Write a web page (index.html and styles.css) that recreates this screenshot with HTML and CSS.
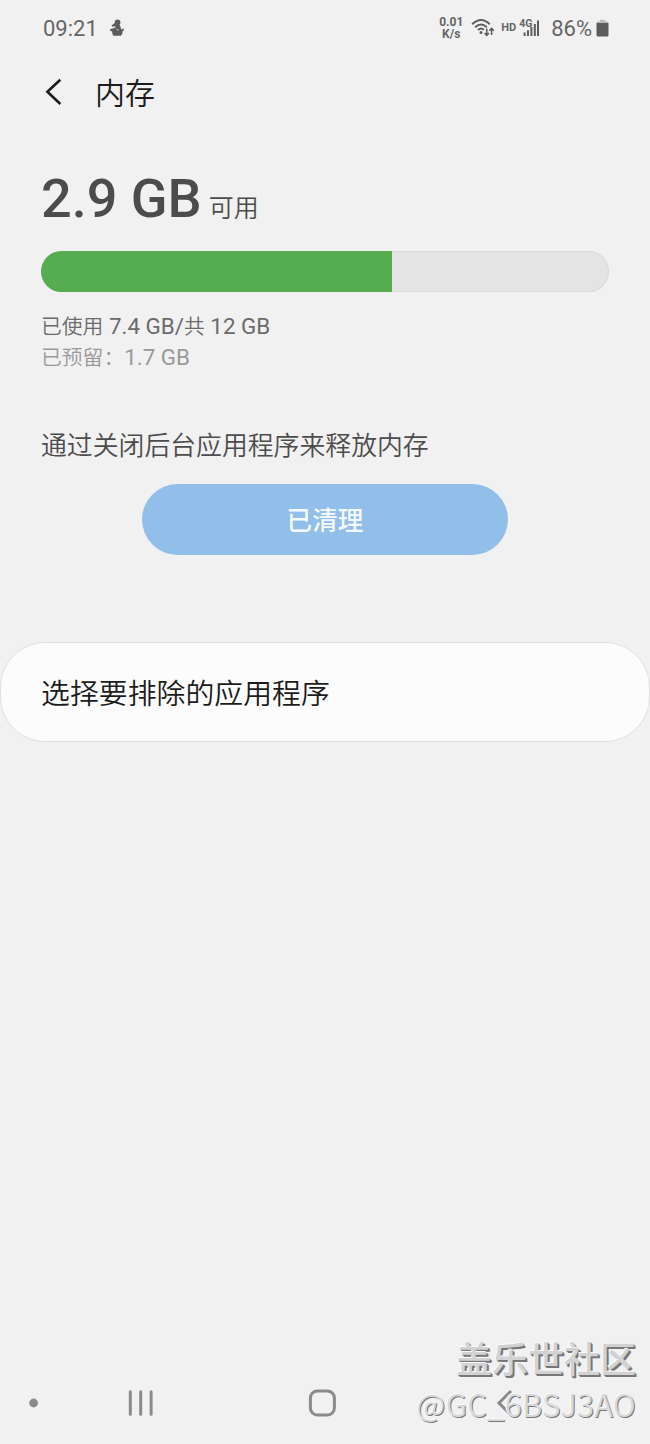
FILE: index.html
```html
<!DOCTYPE html>
<html lang="zh-CN">
  <head>
    <meta charset="UTF-8" />
    <meta name="viewport" content="width=device-width, initial-scale=1.0" />
    <title>内存</title>
    <link rel="stylesheet" href="styles.css">
  </head>
  <body>
    <div class="container">
      <!-- 状态栏 -->
      <div class="status">
        <span class="time">09:21</span>
        <svg class="ico-notice" width="16" height="18" viewBox="0 0 16 18">
          <circle cx="8.6" cy="3.4" r="2.8" />
          <path d="M6.3 3.6 L2.6 6.4 L3.4 7.8 L6.8 7.2 Q6.4 8.6 4.6 9.2 Q1 9.6 0.6 11 Q1.6 12.4 3.2 12.6 Q3 15 4.4 16.8 H11.8 Q13.8 15 13.6 12.4 Q15.2 11.2 15.2 9.6 L12.2 10.6 Q11.8 7.5 10 5 Z" />
          <path class="line" d="M7.4 10.2 Q8.3 11.6 9.8 10.8" />
        </svg>
        <div class="status-right">
          <div class="speed"><span>0.01</span><span>K/s</span></div>
          <svg class="ico-wifi" width="24" height="20" viewBox="0 0 24 20">
            <path d="M1.2 6.2 Q10 -2.2 18.8 6.2 M4.2 9.2 Q10 3.8 15.8 9.2 M7 12 Q10 9.2 13 11.8" />
            <circle cx="10" cy="14.4" r="1.5" />
            <path class="arrow" d="M15.8 10.5 V17.4 M13.6 15 L15.8 17.3 L18 15 M20.6 17 V10.4 M18.4 12.8 L20.6 10.4 L22.8 12.8" />
          </svg>
          <span class="hd">HD</span>
          <div class="signal">
            <svg width="21" height="20" viewBox="0 0 21 20">
              <path d="M5.6 14.5 V18 M9 12.2 V18 M12.4 9 V18 M15.8 6 V18 M19 2.5 V18" />
            </svg>
            <span>4G</span>
          </div>
          <span class="percent">86%</span>
          <svg class="ico-battery" width="13" height="18" viewBox="0 0 13 18">
            <path class="cap" d="M3.8 0.8 H9.2 V2.4 H11.5 Q12.5 2.4 12.5 4 H0.5 Q0.5 2.4 1.5 2.4 H3.8 Z" />
            <path d="M0.5 4 H12.5 V16 Q12.5 17.5 11 17.5 H2 Q0.5 17.5 0.5 16 Z" />
          </svg>
        </div>
      </div>

      <!-- 标题栏 -->
      <header class="header">
        <svg width="20" height="30" viewBox="0 0 20 30">
          <path d="M17.3 1.8 L4.4 13.8 L17.3 26" />
        </svg>
        <h1>内存</h1>
      </header>

      <!-- 主体区 -->
      <main class="main">
        <div class="free"><strong>2.9 GB</strong><span>可用</span></div>
        <div class="bar"><div class="bar-used"></div></div>
        <p class="used"><span>已使用</span> 7.4 GB/<span>共</span> 12 GB</p>
        <p class="reserved"><span>已预留：</span>1.7 GB</p>
        <p class="tip">通过关闭后台应用程序来释放内存</p>
        <button class="btn">已清理</button>
      </main>
      <a class="card" href="#">选择要排除的应用程序</a>

      <!-- 导航键 -->
      <footer class="navbar">
        <svg width="650" height="40" viewBox="0 0 650 40">
          <circle cx="33.6" cy="20" r="4.4" />
          <path d="M130.3 8.7 V31.3 M140.7 8.7 V31.3 M151.1 8.7 V31.3" />
          <rect x="310.4" y="8" width="24" height="24" rx="7" />
          <path class="back" d="M511 8 L499 20 L511 32" />
        </svg>
      </footer>

      <!-- 水印 -->
      <div class="watermark">
        <div class="mark-name">盖乐世社区</div>
        <div class="mark-user">@GC_6BSJ3AO</div>
      </div>
    </div>
  </body>
</html>
```
FILE: styles.css
```css
/* 清除默认样式 */
* {
  margin: 0;
  padding: 0;
  border: none;
  outline: none;
  box-sizing: border-box;
}
a {
  text-decoration: none;
}
svg {
  display: block;
  flex: none;
}

/* 包裹容器 */
.container {
  position: relative;
  width: 650px;
  height: 1444px;
  overflow: hidden;
  background-color: #f1f1f1;
  font-family: Roboto, 'Noto Sans CJK SC', sans-serif;
  display: flex;
  flex-flow: column nowrap;
}

/* 状态栏 */
.status {
  height: 56px;
  padding: 0 41px 0 43px;
  color: #666;
  fill: #5c5c5c;
  font-size: 22px;
  display: flex;
  align-items: center;
}
.ico-notice {
  margin-left: 11px;
}
.ico-notice .line {
  fill: none;
  stroke: #f1f1f1;
  stroke-width: 0.8;
}
.status-right {
  margin-left: auto;
  display: flex;
  align-items: center;
}
.speed {
  width: 24px;
  font-size: 12px;
  font-weight: 700;
  line-height: 12px;
  text-align: center;
  display: flex;
  flex-flow: column;
}
.ico-wifi {
  margin-left: 8px;
}
.ico-wifi path {
  fill: none;
  stroke: #5c5c5c;
  stroke-width: 2;
}
.ico-wifi .arrow {
  stroke-width: 1.5;
}
.hd {
  margin-left: 6px;
  font-size: 11px;
  font-weight: 700;
  position: relative;
  top: -1px;
}
.signal {
  position: relative;
  margin-left: 3px;
}
.signal path {
  stroke: #5c5c5c;
  stroke-width: 2;
}
.signal span {
  position: absolute;
  left: 0;
  top: 0;
  font-size: 10.5px;
  font-weight: 700;
  line-height: 11px;
}
.percent {
  margin-left: 11px;
}
.ico-battery {
  margin-left: 4px;
}
.ico-battery .cap {
  fill: #bbb;
}

/* 标题栏 */
.header {
  height: 74px;
  padding-left: 43px;
  display: flex;
  align-items: center;
}
.header svg {
  margin-right: 32px;
}
.header path {
  fill: none;
  stroke: #1c1c1c;
  stroke-width: 2.6;
}
.header h1 {
  padding-top: 2px;
  font-size: 30px;
  font-weight: 350;
  line-height: 40px;
  color: #1c1c1c;
}

/* 主体区 */
.main {
  padding: 38px 41px 0;
  display: flex;
  flex-flow: column;
}
.free {
  height: 83px;
  line-height: 62px;
  color: #4c4c4c;
}
.free strong {
  font-size: 54px;
  font-weight: 500;
}
.free span {
  margin-left: 7px;
  font-size: 25px;
  font-weight: 350;
}
.bar {
  height: 41px;
  border-radius: 21px;
  background-color: #e4e4e4;
  box-shadow: inset 0 0 0 1px #d8d8d8;
  overflow: hidden;
}
.bar-used {
  width: 351px;
  height: 41px;
  background-color: #55ad50;
}
.used,
.reserved {
  height: 31px;
  font-size: 22.4px;
  line-height: 31px;
}
.used span,
.reserved span {
  font-size: 20.8px;
  font-weight: 350;
}
.used {
  margin-top: 19px;
  color: #6b6b6b;
}
.reserved {
  color: #999;
}
.tip {
  margin-top: 53px;
  font-size: 25.85px;
  font-weight: 350;
  line-height: 41px;
  color: #4c4c4c;
}
.btn {
  width: 366px;
  height: 71px;
  margin: 17px auto 0;
  padding-bottom: 2px;
  border-radius: 36px;
  background-color: #92beea;
  color: #f5faff;
  font-family: inherit;
  font-size: 25.6px;
  font-weight: 500;
}
.card {
  height: 100px;
  margin-top: 87px;
  padding-left: 40px;
  border: 1px solid #e0e0e0;
  border-radius: 45px;
  background-color: #fcfcfc;
  color: #1c1c1c;
  font-size: 28.9px;
  font-weight: 350;
  line-height: 103px;
}

/* 导航键 */
.navbar {
  height: 61px;
  margin-top: auto;
  fill: #8a8a8a;
}
.navbar path,
.navbar rect {
  fill: none;
  stroke: #8a8a8a;
  stroke-width: 3;
  stroke-linecap: round;
}
.navbar .back {
  stroke-linecap: butt;
}

/* 水印 */
.watermark {
  position: absolute;
  right: 14px;
  bottom: 17px;
  text-align: right;
  white-space: nowrap;
}
.mark-name {
  font-family: 'Noto Sans CJK SC', sans-serif;
  font-size: 36px;
  font-weight: 500;
  line-height: 48px;
  color: #d2d2d2;
  text-shadow: -1px -1px 0 #fafafa, 1px 1px 0 #777, 2px 2px 0 #777;
}
.mark-user {
  font-family: 'Noto Sans CJK SC', sans-serif;
  font-size: 31px;
  font-weight: 350;
  line-height: 46px;
  letter-spacing: 0.3px;
  color: #d8d8d8;
  text-shadow: -1px -1px 0 #fafafa, 1px 1px 0 #777;
}
```
